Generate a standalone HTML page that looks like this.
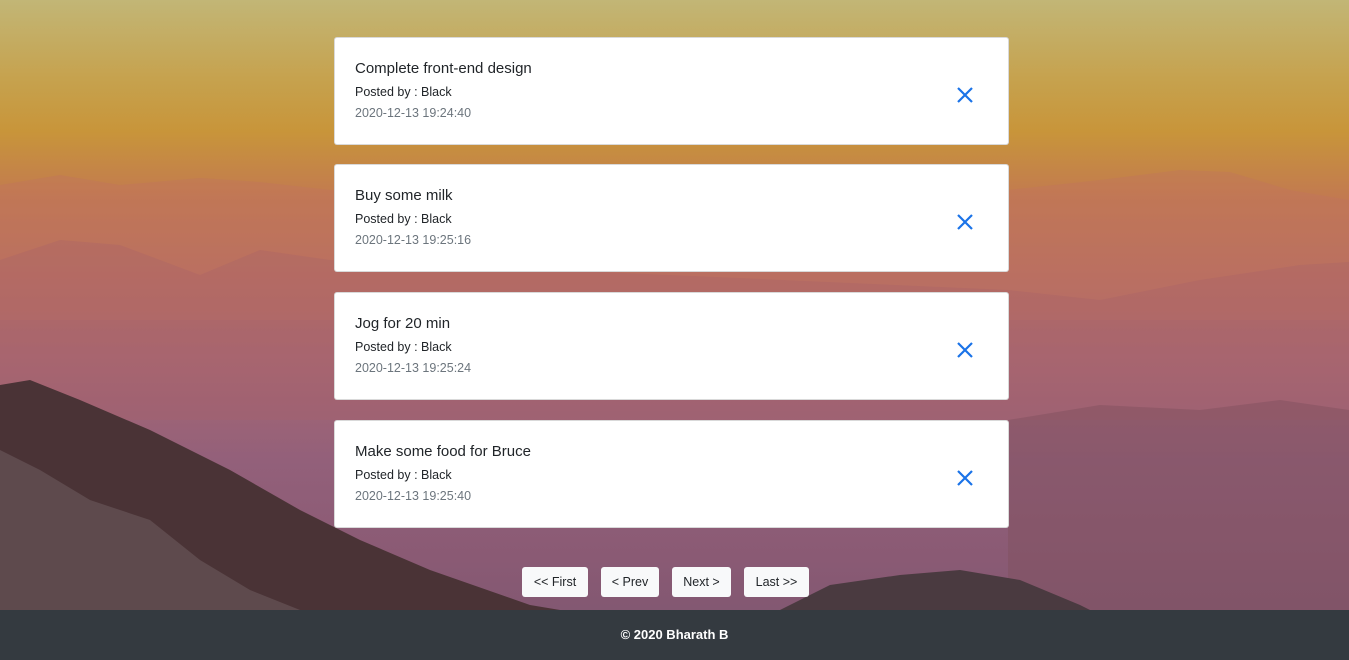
<!DOCTYPE html>
<html style="background:#343a40"><head><style>
*{margin:0;padding:0;box-sizing:border-box}
body{width:1349px;height:657px;overflow:hidden;position:relative;font-family:"Liberation Sans",sans-serif;
background:linear-gradient(180deg,#c2b676 0%,#c6a24e 12%,#c8953a 20%,#c27a50 30%,#b76e62 42%,#a86772 55%,#93607a 70%,#8a5a74 85%,#7c5670 100%);}
svg.bg{position:absolute;left:0;top:0}
.card{position:absolute;left:334px;width:675px;height:108px;background:#fff;border:1px solid rgba(0,0,0,.15);border-radius:3px}
.t{position:absolute;left:20px;top:22px;font-size:15px;color:#212529}
.p{position:absolute;left:20px;top:47px;font-size:12.5px;color:#212529}
.d{position:absolute;left:20px;top:68px;font-size:12.5px;color:#6c757d}
.x{position:absolute;left:622px;top:49px}
.btn{position:absolute;top:567px;height:30px;background:#f8f9fa;border-radius:3px;font-size:12.5px;color:#212529;text-align:center;line-height:31px}
footer{position:absolute;left:0;top:610px;width:1349px;height:47px;background:#343a40;color:#fff;font-weight:bold;font-size:13px;text-align:center;line-height:50px}
</style></head><body>
<svg class="bg" width="1349" height="610">
<polygon points="0,185 60,175 120,185 200,178 260,182 330,190 1008,190 1100,180 1180,170 1230,172 1290,190 1349,200 1349,320 0,320" fill="#bf7460" opacity=".35"/>
<polygon points="0,260 60,240 120,245 200,275 260,250 330,260 1008,290 1100,300 1200,280 1300,265 1349,262 1349,420 0,420" fill="#a7606a" opacity=".3"/>
<polygon points="1008,420 1100,405 1200,410 1280,400 1349,410 1349,610 1008,610" fill="#7e4f5e" opacity=".45"/>
<polygon points="0,385 30,380 80,400 150,430 230,470 300,510 360,540 430,570 530,605 560,610 0,610" fill="#4a3336"/>
<polygon points="0,450 40,470 90,500 150,520 200,560 250,590 300,610 0,610" fill="#6c5a5e" opacity=".6"/>
<polygon points="780,610 830,585 900,575 960,570 1020,580 1080,605 1090,610" fill="#4a3a40"/>
</svg>

<div class="card" style="top:37px"><div class="t">Complete front-end design</div><div class="p">Posted by : Black</div><div class="d">2020-12-13 19:24:40</div><svg class="x" width="16" height="16"><path d="M1 1L15 15M15 1L1 15" stroke="#1a73e8" stroke-width="2.2"/></svg></div>
<div class="card" style="top:164px"><div class="t">Buy some milk</div><div class="p">Posted by : Black</div><div class="d">2020-12-13 19:25:16</div><svg class="x" width="16" height="16"><path d="M1 1L15 15M15 1L1 15" stroke="#1a73e8" stroke-width="2.2"/></svg></div>
<div class="card" style="top:292px"><div class="t">Jog for 20 min</div><div class="p">Posted by : Black</div><div class="d">2020-12-13 19:25:24</div><svg class="x" width="16" height="16"><path d="M1 1L15 15M15 1L1 15" stroke="#1a73e8" stroke-width="2.2"/></svg></div>
<div class="card" style="top:420px"><div class="t">Make some food for Bruce</div><div class="p">Posted by : Black</div><div class="d">2020-12-13 19:25:40</div><svg class="x" width="16" height="16"><path d="M1 1L15 15M15 1L1 15" stroke="#1a73e8" stroke-width="2.2"/></svg></div>

<div class="btn" style="left:522px;width:66px">&lt;&lt; First</div>
<div class="btn" style="left:601px;width:58px">&lt; Prev</div>
<div class="btn" style="left:672px;width:59px">Next &gt;</div>
<div class="btn" style="left:744px;width:65px">Last &gt;&gt;</div>
<footer>© 2020 Bharath B</footer>
</body></html>
